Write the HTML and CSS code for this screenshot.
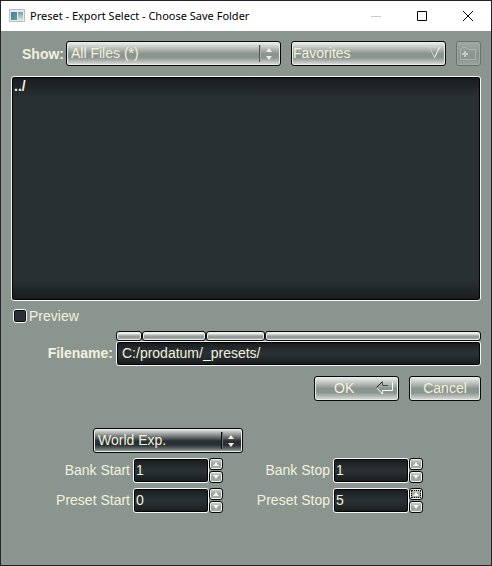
FILE: index.html
```html
<!DOCTYPE html>
<html lang="en">
<head>
<meta charset="utf-8">
<title>Preset - Export Select - Choose Save Folder</title>
<link rel="stylesheet" href="styles.css">
</head>
<body>
<main class="window">
  <header class="titlebar">
    <svg class="app-icon" width="16" height="14" viewBox="0 0 16 14" aria-hidden="true">
      <defs>
        <linearGradient id="pane" x1="0" y1="0" x2="1" y2="1"><stop offset="0" stop-color="#4878a8"/><stop offset="1" stop-color="#5aa878"/></linearGradient>
        <linearGradient id="side" x1="0" y1="0" x2="0" y2="1"><stop offset="0" stop-color="#6f9fa4"/><stop offset="1" stop-color="#dfe4e6"/></linearGradient>
      </defs>
      <rect x=".5" y=".5" width="15" height="12" fill="#e8ebee" stroke="#b9bec4"/>
      <rect x="2" y="3" width="6" height="8" fill="url(#pane)"/>
      <rect x="9" y="3" width="5" height="8" fill="url(#side)"/>
    </svg>
    <h1 class="title">Preset - Export Select - Choose Save Folder</h1>
    <div class="caption">
      <button class="caption-button" aria-label="Minimize" disabled><svg width="10" height="10" viewBox="0 0 10 10"><path d="M0 5.500H10" stroke="#cccccc"/></svg></button>
      <button class="caption-button" aria-label="Maximize"><svg width="10" height="10" viewBox="0 0 10 10"><path d="M.5 .5H9.500V9.500H.5Z" stroke="#000" fill="none"/></svg></button>
      <button class="caption-button" aria-label="Close"><svg width="10" height="10" viewBox="0 0 10 10"><path d="M0 0L10 10M10 0L0 10" stroke="#000"/></svg></button>
    </div>
  </header>

  <form class="content">
    <div class="toolbar">
      <label class="strong-label" for="show">Show:</label>
      <div class="choice choice-show">
        <select class="select raised" id="show"><option>All Files (*)</option></select>
        <svg class="choice-arrows" width="16" height="17" viewBox="0 0 16 17" aria-hidden="true"><path d="M.5 0V17" stroke="#4e5652"/><path d="M1.500 0V17" stroke="#a9b0ac"/><path d="M7 7L10 3L13 7ZM7 11H13L10 15Z" fill="#f0efe0"/></svg>
      </div>
      <button class="raised favorites" type="button">Favorites
        <svg width="13" height="13" viewBox="0 0 13 13" aria-hidden="true"><path d="M11.500 1.500H1.500L6.500 11.500" fill="none" stroke="#c6ccc8"/><path d="M6.500 11.500L11.500 1.500" stroke="#fff"/></svg>
      </button>
      <button class="new-folder" type="button" aria-label="New folder" disabled>
        <svg width="17" height="15" viewBox="0 0 17 15" aria-hidden="true"><path d="M.5 13.500V3.500L2.500 1.500H6.500L8.500 3.500H15.500V13.500Z" fill="none" stroke="#aab2ad"/><path d="M2 8H8M5 5V11" stroke="#c4cbc5" stroke-width="2"/></svg>
      </button>
    </div>

    <div class="sunken file-list" role="listbox" aria-label="Files" tabindex="0">
      <div role="option">../</div>
    </div>

    <label class="preview"><input class="check" type="checkbox">Preview</label>

    <div class="filename">
      <label class="strong-label" for="filename">Filename:</label>
      <div class="path">
        <div class="crumbs">
          <button class="crumb" type="button" aria-label="Drive"></button>
          <button class="crumb" type="button" aria-label="First folder"></button>
          <button class="crumb" type="button" aria-label="Second folder"></button>
          <button class="crumb" type="button" aria-label="File"></button>
        </div>
        <input class="sunken path-input" id="filename" type="text" value="C:/prodatum/_presets/">
      </div>
    </div>

    <div class="actions">
      <button class="raised ok" type="button">OK
        <svg width="18" height="14" viewBox="0 0 18 14" aria-hidden="true"><path d="M6.500 .5L.5 6.500" fill="none" stroke="#20241f"/><path d="M6.500 1V4.500H12.500" fill="none" stroke="#4a514d"/><path d="M12.500 4.500V1.500H16.500" fill="none" stroke="#b9c0bb"/><path d="M16.500 1V9.500H6.500V13L1 7" fill="none" stroke="#fff"/></svg>
      </button>
      <button class="raised cancel" type="button">Cancel</button>
    </div>

    <div class="export">
      <div class="choice choice-rom">
        <select class="select raised dark" aria-label="ROM"><option>World Exp.</option></select>
        <svg class="choice-arrows" width="16" height="17" viewBox="0 0 16 17" aria-hidden="true"><path d="M.5 0V17" stroke="#0c0f10"/><path d="M1.500 0V17" stroke="#6c7371"/><path d="M7 7L10 3L13 7ZM7 11H13L10 15Z" fill="#f0efe0"/></svg>
      </div>
      <div class="ranges">
        <label for="bank-start">Bank Start</label>
        <div class="spinner">
          <input class="sunken number" id="bank-start" type="text" value="1">
          <button class="step" type="button" aria-label="Increase bank start"><svg width="6" height="4" viewBox="0 0 6 4"><path d="M0 4L3 0L6 4Z"/></svg></button>
          <button class="step" type="button" aria-label="Decrease bank start"><svg width="6" height="4" viewBox="0 0 6 4"><path d="M0 0H6L3 4Z"/></svg></button>
        </div>
        <label for="bank-stop">Bank Stop</label>
        <div class="spinner">
          <input class="sunken number" id="bank-stop" type="text" value="1">
          <button class="step" type="button" aria-label="Increase bank stop"><svg width="6" height="4" viewBox="0 0 6 4"><path d="M0 4L3 0L6 4Z"/></svg></button>
          <button class="step" type="button" aria-label="Decrease bank stop"><svg width="6" height="4" viewBox="0 0 6 4"><path d="M0 0H6L3 4Z"/></svg></button>
        </div>
        <label for="preset-start">Preset Start</label>
        <div class="spinner">
          <input class="sunken number" id="preset-start" type="text" value="0">
          <button class="step" type="button" aria-label="Increase preset start"><svg width="6" height="4" viewBox="0 0 6 4"><path d="M0 4L3 0L6 4Z"/></svg></button>
          <button class="step" type="button" aria-label="Decrease preset start"><svg width="6" height="4" viewBox="0 0 6 4"><path d="M0 0H6L3 4Z"/></svg></button>
        </div>
        <label for="preset-stop">Preset Stop</label>
        <div class="spinner">
          <input class="sunken number" id="preset-stop" type="text" value="5">
          <button class="step step-focused" type="button" aria-label="Increase preset stop"><svg width="6" height="4" viewBox="0 0 6 4"><path d="M0 4L3 0L6 4Z"/></svg></button>
          <button class="step" type="button" aria-label="Decrease preset stop"><svg width="6" height="4" viewBox="0 0 6 4"><path d="M0 0H6L3 4Z"/></svg></button>
        </div>
      </div>
    </div>
  </form>
</main>
</body>
</html>
```
FILE: styles.css
```css
:root {
  --face: #8b958f;
  --ink: #f2f1dc;
  --well: #293033;
  --well-edge: #171b1d;
  --shade: 10px;
}

* {
  box-sizing: border-box;
}

body {
  margin: 0;
  background: var(--face);
  color: var(--ink);
  font: 14px/16px "Liberation Sans", Arial, sans-serif;
}

button,
input,
select {
  margin: 0;
  padding: 0;
  color: inherit;
  font: inherit;
}

svg {
  display: block;
  flex: none;
}

.window {
  display: flex;
  flex-direction: column;
  min-height: 100vh;
  border: 1px solid #242327;
}

/* Title bar */
.titlebar {
  display: flex;
  align-items: center;
  height: 30px;
  padding-left: 8px;
  background: #fff;
  color: #000;
}

.title {
  flex: 1;
  margin: 0 0 0 5px;
  font: 11px/16px "Noto Sans", "Open Sans", sans-serif;
  white-space: nowrap;
}

.caption {
  display: flex;
}

.caption-button {
  display: flex;
  align-items: center;
  justify-content: center;
  width: 46px;
  height: 28px;
  border: 0;
  background: none;
}

/* Shared surfaces */
.raised {
  height: 25px;
  padding-bottom: 2px;
  border: 1px solid #080a09;
  border-radius: 3px;
  background: linear-gradient(#f0f2f0, #d3d7d4 15%, #8b958f 50%, #8b958f 68%, #c3c8c5 90%, #e0e3e1);
  box-shadow: inset 0 0 0 1px #e8ebe9;
}

.dark {
  background: linear-gradient(#f0f2f0, #b5b9b7 15%, #293033 52%, #293033 70%, #6c7270 88%, #b5b9b7);
}

.sunken {
  padding: 0 2px 2px;
  border: 1px solid #f6f7f5;
  border-radius: 3px;
  background: linear-gradient(var(--well-edge), var(--well) var(--shade), var(--well) calc(100% - var(--shade)), var(--well-edge));
  box-shadow: inset 0 0 0 1px #000;
}

.strong-label {
  font-weight: bold;
  text-align: right;
}

.content {
  display: flex;
  flex: 1;
  flex-direction: column;
  padding: 10px 10px 52px;
}

/* Filter row */
.toolbar {
  display: flex;
  align-items: center;
  gap: 10px;
}

.toolbar .strong-label {
  width: 53px;
  margin-right: -8px;
}

.choice {
  position: relative;
}

.choice-show {
  flex: 1 1 215px;
}

.select {
  display: block;
  width: 100%;
  padding-left: 4px;
  appearance: none;
}

.choice-arrows {
  position: absolute;
  top: 4px;
  right: 6px;
  pointer-events: none;
}

.favorites {
  display: flex;
  flex: 1 1 155px;
  align-items: center;
  justify-content: space-between;
  padding-right: 4px;
  padding-left: 1px;
}

.new-folder {
  display: flex;
  align-items: center;
  justify-content: center;
  width: 25px;
  height: 25px;
  border: 1px solid #69716c;
  border-radius: 3px;
  background: linear-gradient(#a2aaa5, #8b958f 50%, #8b958f 70%, #9ba49e);
  box-shadow: inset 0 0 0 1px #a0a9a3;
}

.file-list {
  --shade: 20px;
  flex: 1;
  min-height: 80px;
  margin-top: 10px;
  padding-top: 1px;
  font-weight: bold;
}

.preview {
  display: flex;
  align-items: center;
  align-self: flex-start;
  gap: 2px;
  margin: 7px 2px;
}

.check {
  width: 14px;
  height: 14px;
  border: 1px solid #f6f7f5;
  border-radius: 3px;
  background: var(--well);
  box-shadow: inset 0 0 0 1px #0c0e0f;
  appearance: none;
}

.check:checked {
  background: var(--ink);
}

/* Path */
.filename {
  display: flex;
  align-items: flex-end;
  gap: 3px;
}

.filename .strong-label {
  width: 102px;
  padding-bottom: 5px;
}

.path {
  flex: 1;
}

.crumbs {
  display: grid;
  grid-template-columns: 26px 64px 59px 1fr;
}

.crumb {
  height: 10px;
  border: 1px solid #080a09;
  border-radius: 3px;
  background: linear-gradient(#f0f2f0 20%, #bcc2be 35%, #8b958f 60%, #b3bab5);
  box-shadow: inset 0 0 0 1px #e8ebe9;
}

.path-input {
  display: block;
  width: 100%;
  height: 25px;
  padding-left: 5px;
}

.actions {
  display: flex;
  justify-content: flex-end;
  gap: 10px;
  margin-top: 10px;
}

.ok {
  display: flex;
  align-items: center;
  justify-content: space-between;
  width: 85px;
  padding-right: 4px;
  padding-left: 19px;
}

.cancel {
  width: 72px;
}

/* Export range */
.export {
  margin-top: 27px;
}

.choice-rom {
  width: 150px;
  margin-left: 82px;
}

.ranges {
  display: grid;
  grid-template-columns: 119px 90px 104px 90px;
  align-items: center;
  column-gap: 3px;
  row-gap: 5px;
  margin-top: 5px;
  text-align: right;
}

.ranges label {
  padding-bottom: 2px;
}

.spinner {
  display: grid;
  grid-template-columns: 76px 14px;
  grid-template-rows: 12px 12px;
  row-gap: 1px;
}

.number {
  grid-row: span 2;
  width: 100%;
}

.step {
  display: flex;
  align-items: center;
  justify-content: center;
  border: 1px solid #080a09;
  border-radius: 3px;
  background: linear-gradient(#d3d7d4, #9aa39d 50%, #a9b0ac);
  box-shadow: inset 0 0 0 1px #eef0ee;
  fill: #f5f5e9;
}

.step-focused {
  outline: 1px dotted #000;
  outline-offset: -3px;
}
```
